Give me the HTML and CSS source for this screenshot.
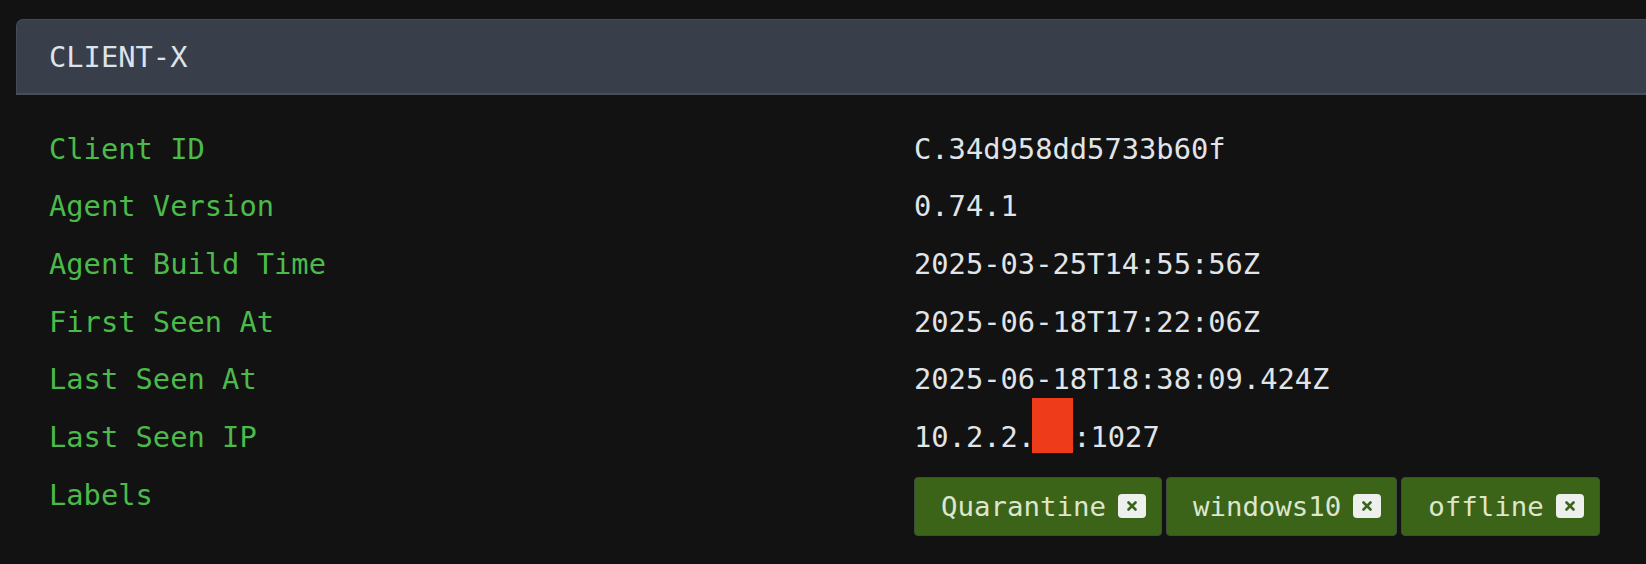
FILE: index.html
```html
<!DOCTYPE html>
<html>
<head>
<meta charset="utf-8">
<link rel="stylesheet" href="styles.css">
</head>
<body>
<div class="page">
  <section class="card">
    <header class="card-header">CLIENT-X</header>
    <div class="details">
      <div class="label">Client ID</div><div class="value">C.34d958dd5733b60f</div>
      <div class="label">Agent Version</div><div class="value">0.74.1</div>
      <div class="label">Agent Build Time</div><div class="value">2025-03-25T14:55:56Z</div>
      <div class="label">First Seen At</div><div class="value">2025-06-18T17:22:06Z</div>
      <div class="label">Last Seen At</div><div class="value">2025-06-18T18:38:09.424Z</div>
      <div class="label">Last Seen IP</div><div class="value">10.2.2.<span class="redact"><span class="redact-box"></span></span>:1027</div>
      <div class="label">Labels</div>
      <div class="value chips">
        <span class="chip">Quarantine<span class="chip-x"><svg width="12" height="12" viewBox="0 0 12 12"><path d="M2.5 2.5 L9.5 9.5 M9.5 2.5 L2.5 9.5" stroke="#3b641c" stroke-width="2.6" stroke-linecap="round"/></svg></span></span>
        <span class="chip">windows10<span class="chip-x"><svg width="12" height="12" viewBox="0 0 12 12"><path d="M2.5 2.5 L9.5 9.5 M9.5 2.5 L2.5 9.5" stroke="#3b641c" stroke-width="2.6" stroke-linecap="round"/></svg></span></span>
        <span class="chip">offline<span class="chip-x"><svg width="12" height="12" viewBox="0 0 12 12"><path d="M2.5 2.5 L9.5 9.5 M9.5 2.5 L2.5 9.5" stroke="#3b641c" stroke-width="2.6" stroke-linecap="round"/></svg></span></span>
      </div>
    </div>
  </section>
</div>
</body>
</html>
```

FILE: styles.css
```css
html, body {
  margin: 0;
  padding: 0;
  background: #121212;
}
body {
  font-family: "DejaVu Sans Mono", "Liberation Mono", monospace;
  overflow: hidden;
  width: 1646px;
  height: 564px;
}
.page {
  padding: 19px 0 0 16px;
}
.card {
  display: flex;
  flex-direction: column;
}
.card-header {
  height: 76px;
  box-sizing: border-box;
  background: #383e4a;
  border: 1px solid #454b57;
  border-right: none;
  border-bottom: 2px solid #474d59;
  border-top-left-radius: 7px;
  padding-left: 32px;
  display: flex;
  align-items: center;
  font-size: 28.75px;
  color: #dde3ea;
  margin-bottom: 1px;
}
.details {
  display: grid;
  grid-template-columns: 865px 1fr;
  grid-auto-rows: 57.7px;
  padding: 24.6px 0 0 33px;
  font-size: 28.75px;
  line-height: 57.7px;
}
.label {
  color: #4cba4a;
  white-space: nowrap;
}
.value {
  color: #e1e5e9;
  white-space: nowrap;
}
.redact {
  position: relative;
  display: inline-block;
  width: 41px;
  height: 0;
  margin-left: -3px;
  vertical-align: baseline;
}
.redact-box {
  position: absolute;
  left: 0;
  bottom: -5.5px;
  width: 41px;
  height: 55px;
  background: #ee3b19;
}
.chips {
  display: flex;
  align-items: flex-start;
  gap: 4px;
  padding-top: 10px;
}
.chip {
  display: flex;
  align-items: center;
  height: 59px;
  box-sizing: border-box;
  background: #3b6419;
  border: 1px solid #3d4d3e;
  border-radius: 4px;
  padding: 0 15px 0 26px;
  font-size: 27.4px;
  line-height: 1;
  color: #dfe6cf;
}
.chip-x {
  display: flex;
  align-items: center;
  justify-content: center;
  width: 28px;
  height: 24px;
  margin-left: 12px;
  background: #eef0ee;
  border-radius: 4px;
}
```
